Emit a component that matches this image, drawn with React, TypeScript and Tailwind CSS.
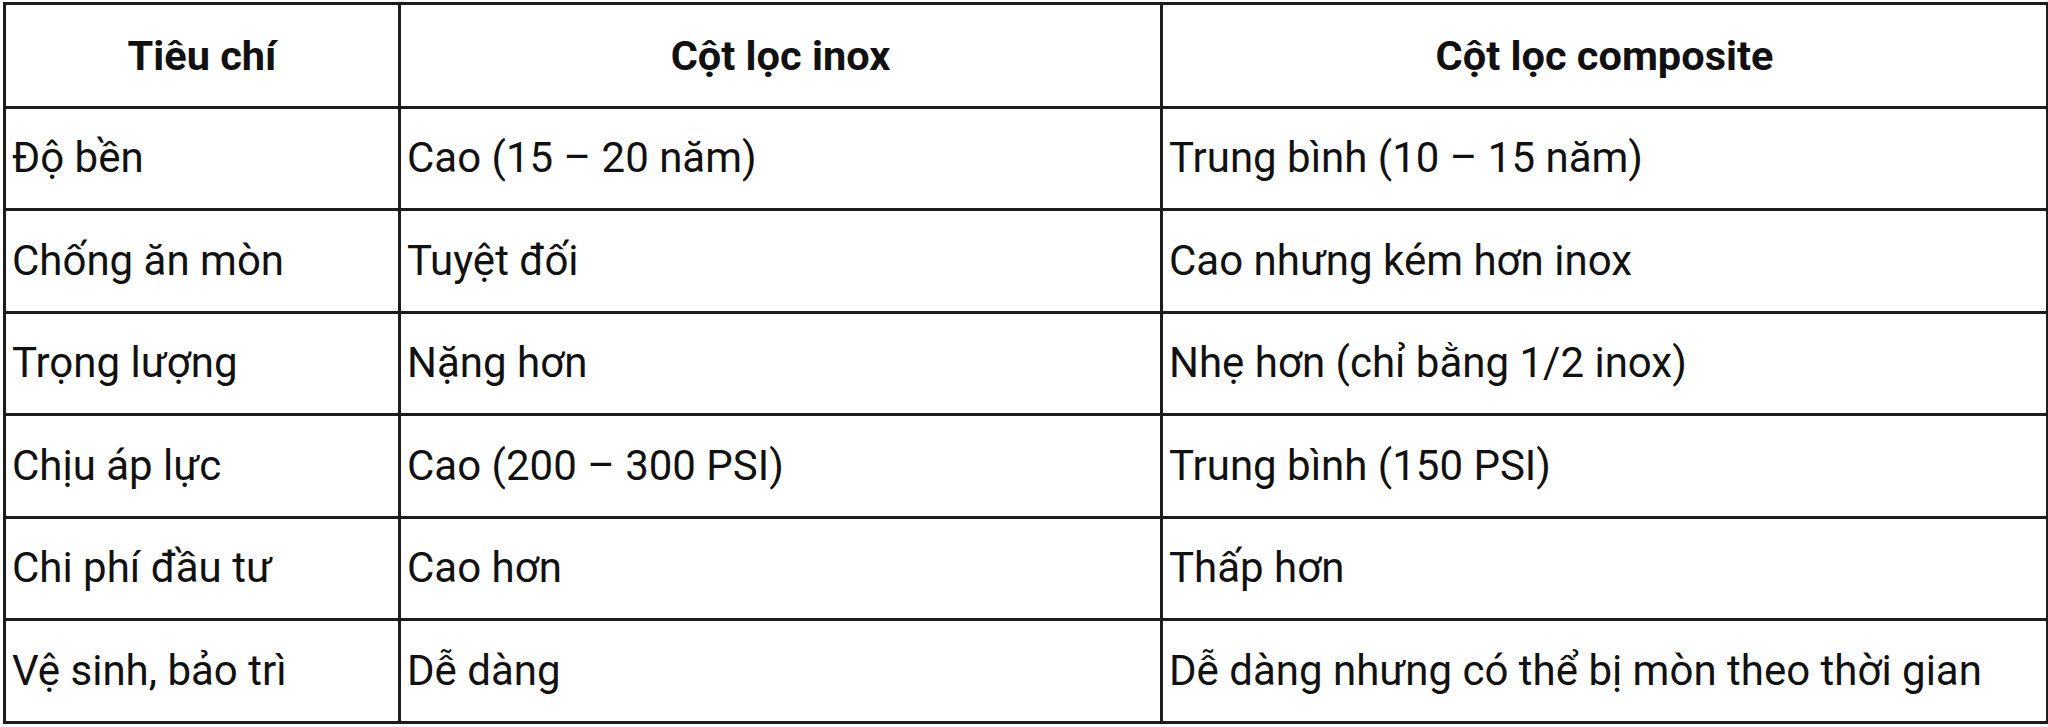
import React from "react";

const rows: [string, string, string][] = [
  ["Độ bền", "Cao (15 – 20 năm)", "Trung bình (10 – 15 năm)"],
  ["Chống ăn mòn", "Tuyệt đối", "Cao nhưng kém hơn inox"],
  ["Trọng lượng", "Nặng hơn", "Nhẹ hơn (chỉ bằng 1/2 inox)"],
  ["Chịu áp lực", "Cao (200 – 300 PSI)", "Trung bình (150 PSI)"],
  ["Chi phí đầu tư", "Cao hơn", "Thấp hơn"],
  ["Vệ sinh, bảo trì", "Dễ dàng", "Dễ dàng nhưng có thể bị mòn theo thời gian"],
];

export default function App() {
  return (
    <div className="min-h-screen bg-white pt-[2px] pl-[3px] font-['Roboto',sans-serif] text-[#111]">
      <table className="w-[2043px] table-fixed border-collapse border-[3px] border-[#1c1c1c]">
        <colgroup>
          <col className="w-[395px]" />
          <col className="w-[762px]" />
          <col className="w-[886px]" />
        </colgroup>
        <thead>
          <tr className="h-[103.5px]">
            <th className="border-[3px] border-[#1c1c1c] text-center align-middle text-[41.5px] font-bold leading-none">
              Tiêu chí
            </th>
            <th className="border-[3px] border-[#1c1c1c] text-center align-middle text-[41.5px] font-bold leading-none">
              Cột lọc inox
            </th>
            <th className="border-[3px] border-[#1c1c1c] text-center align-middle text-[41.5px] font-bold leading-none">
              Cột lọc composite
            </th>
          </tr>
        </thead>
        <tbody>
          {rows.map((r) => (
            <tr key={r[0]} className="h-[102.5px]">
              {r.map((cell, i) => (
                <td
                  key={i}
                  className="border-[3px] border-[#1c1c1c] pl-[6px] align-middle text-[42px] leading-none whitespace-nowrap"
                >
                  {cell}
                </td>
              ))}
            </tr>
          ))}
        </tbody>
      </table>
    </div>
  );
}
